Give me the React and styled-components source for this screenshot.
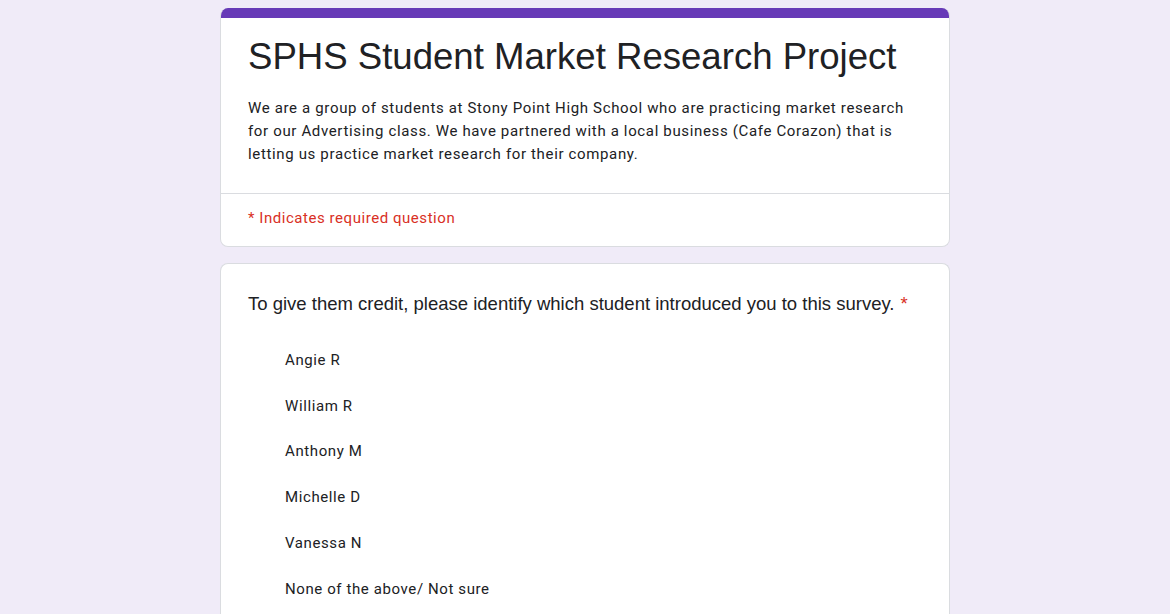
import React from 'react';
import styled, { createGlobalStyle } from 'styled-components';

const GlobalStyle = createGlobalStyle`
  html, body {
    margin: 0;
    padding: 0;
    background: #f0ebf8;
  }
  * { box-sizing: border-box; }
`;

const Page = styled.div`
  min-height: 100vh;
  background: #f0ebf8;
  padding-top: 8px;
  display: flex;
  flex-direction: column;
  align-items: center;
  gap: 16px;
`;

const Card = styled.div`
  width: 730px;
  background: #fff;
  border: 1px solid #dadce0;
  border-radius: 8px;
  overflow: hidden;
`;

const HeaderCard = styled(Card)`
  border-top: none;
`;

const AccentBar = styled.div`
  height: 10px;
  background: #673ab7;
`;

const HeaderBody = styled.div`
  padding: 15px 36px 27px 27px;
`;

const Title = styled.h1`
  margin: 0;
  font-family: "Liberation Sans", Arial, sans-serif;
  font-weight: 400;
  font-size: 36.6px;
  line-height: 48px;
  color: #202124;
  white-space: nowrap;
`;

const Description = styled.p`
  margin: 16px 0 0;
  font-family: Roboto, "Noto Sans", sans-serif;
  font-size: 15px;
  line-height: 23px;
  letter-spacing: 0.65px;
  color: #202124;
`;

const Divider = styled.div`
  height: 1px;
  background: #dadce0;
`;

const RequiredNote = styled.div`
  padding: 14px 27px 18px;
  font-family: Roboto, "Noto Sans", sans-serif;
  font-size: 15px;
  line-height: 20px;
  letter-spacing: 0.55px;
  color: #d93025;
`;

const QuestionCard = styled(Card)`
  padding: 26px 27px 0;
  border-bottom: none;
  border-radius: 8px 8px 0 0;
  flex: 1;
`;

const QuestionTitle = styled.div`
  font-family: "Liberation Sans", Arial, sans-serif;
  font-size: 18.5px;
  line-height: 28px;
  color: #202124;
`;

const Star = styled.span`
  color: #d93025;
  margin-left: 6px;
`;

const Options = styled.div`
  display: flex;
  flex-direction: column;
  padding: 19px 0 0 37px;
`;

const Option = styled.div`
  height: 45.8px;
  display: flex;
  align-items: center;
  font-family: Roboto, "Noto Sans", sans-serif;
  font-size: 15px;
  letter-spacing: 0.6px;
  color: #202124;
`;

const students = [
  'Angie R',
  'William R',
  'Anthony M',
  'Michelle D',
  'Vanessa N',
  'None of the above/ Not sure',
];

export default function App() {
  return (
    <>
      <GlobalStyle />
      <Page>
        <HeaderCard>
          <AccentBar />
          <HeaderBody>
            <Title>SPHS Student Market Research Project</Title>
            <Description>
              We are a group of students at Stony Point High School who are practicing market research
              for our Advertising class. We have partnered with a local business (Cafe Corazon) that is
              letting us practice market research for their company.
            </Description>
          </HeaderBody>
          <Divider />
          <RequiredNote>* Indicates required question</RequiredNote>
        </HeaderCard>

        <QuestionCard>
          <QuestionTitle>
            To give them credit, please identify which student introduced you to this survey.
            <Star>*</Star>
          </QuestionTitle>
          <Options>
            {students.map((name) => (
              <Option key={name}>{name}</Option>
            ))}
          </Options>
        </QuestionCard>
      </Page>
    </>
  );
}
